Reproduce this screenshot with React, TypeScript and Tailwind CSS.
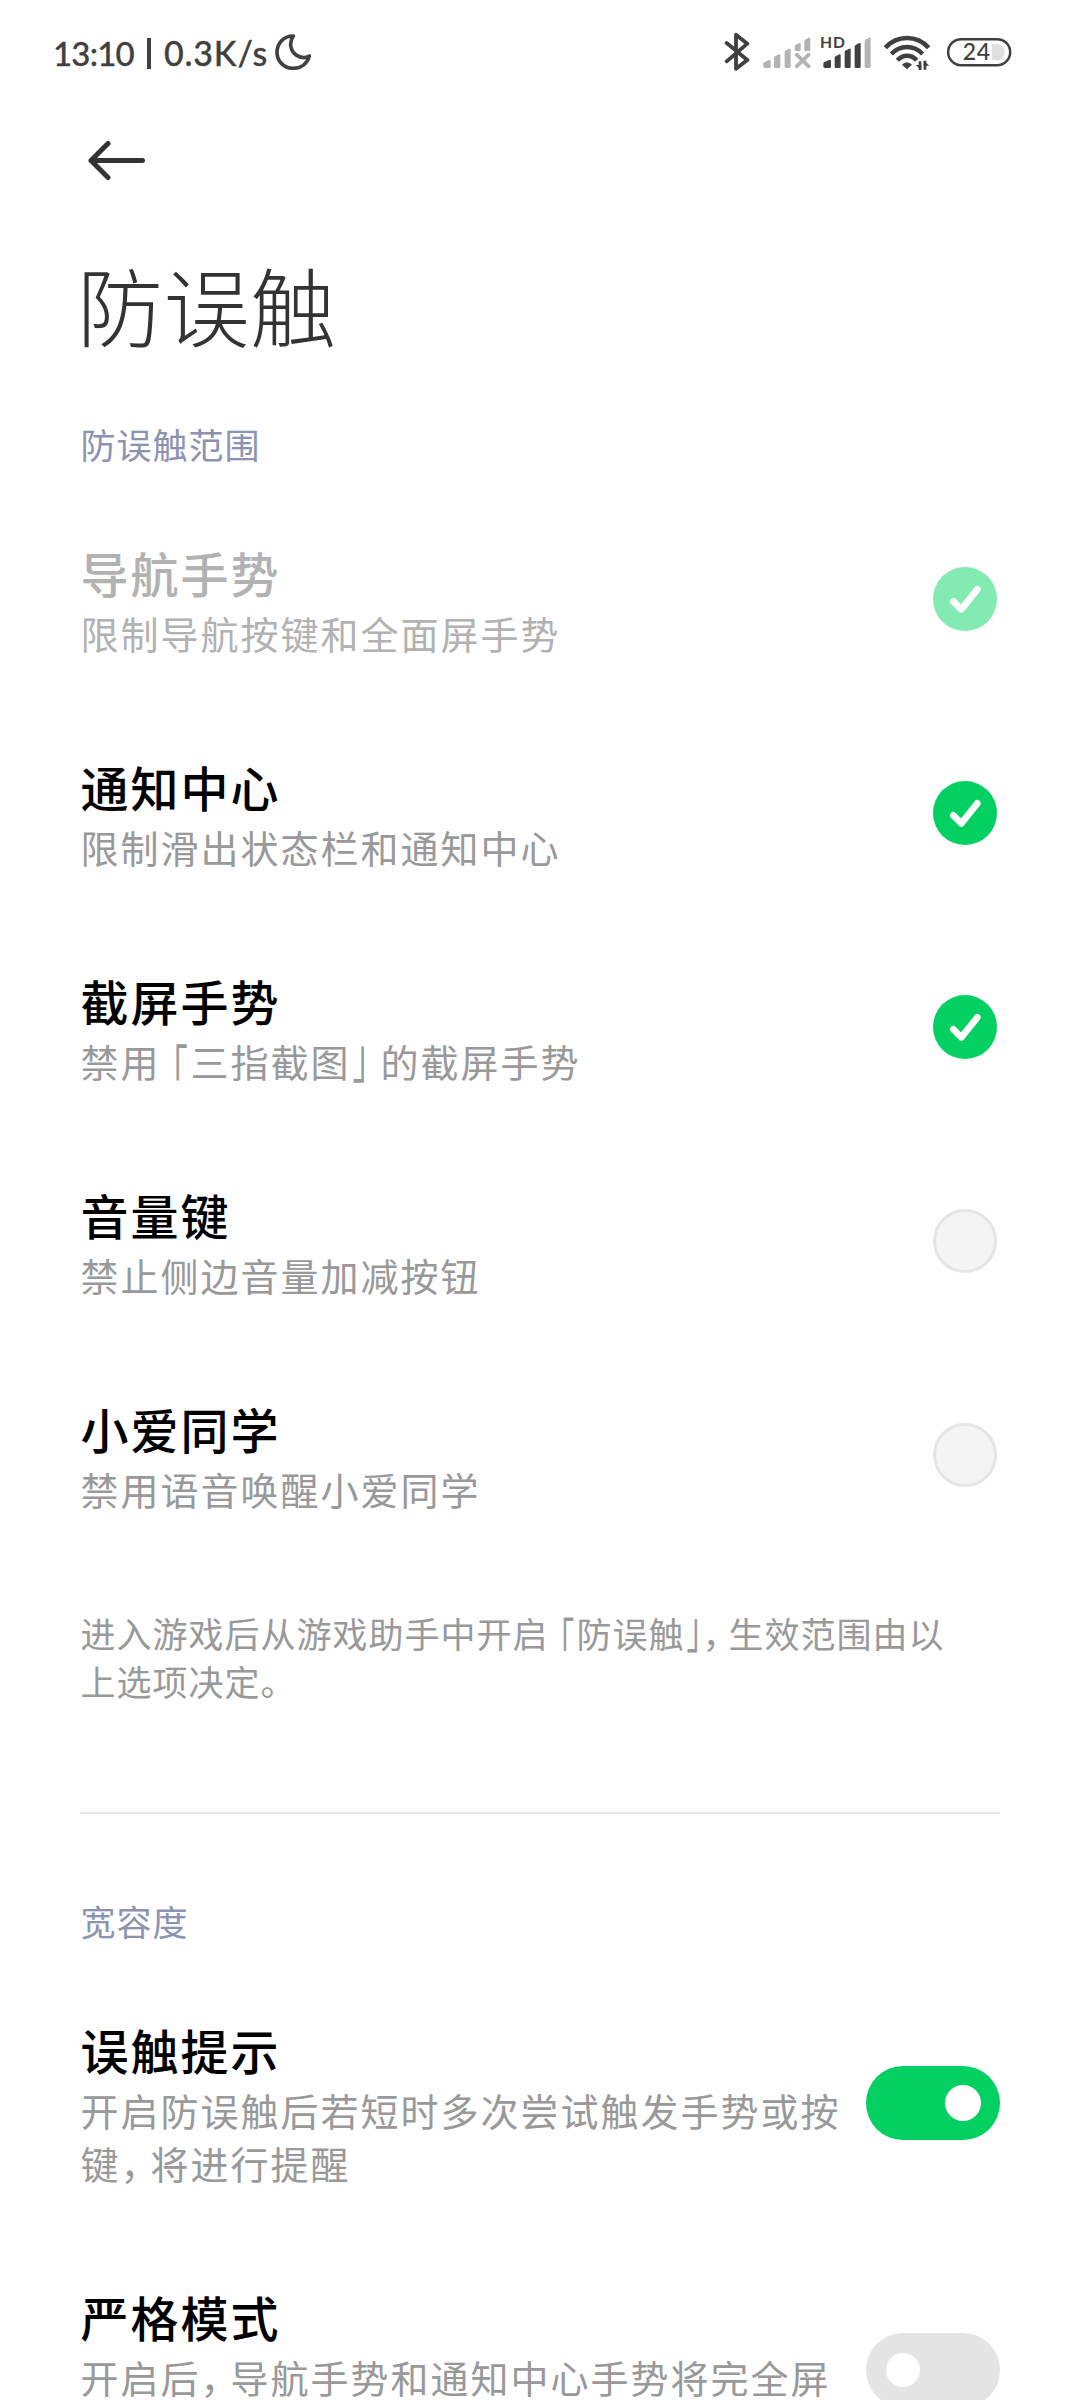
import type { ReactNode } from "react";

type RangeItem = {
  title: string;
  summary: ReactNode;
  checked: boolean;
  disabled?: boolean;
};

function Open({ className }: { className: string }) {
  return (
    <span className={`inline-block text-right [font-feature-settings:'halt'] ${className}`}>
      <span className="inline-block origin-[50%_21%] scale-x-85 scale-y-[1.45]">「</span>
    </span>
  );
}

function Close({ className }: { className: string }) {
  return (
    <span className={`inline-block [font-feature-settings:'halt'] ${className}`}>
      <span className="inline-block origin-[50%_82%] scale-x-85 scale-y-[1.45]">」</span>
    </span>
  );
}

function Comma({ className }: { className: string }) {
  return <span className={`inline-block [font-feature-settings:'halt'] ${className}`}>，</span>;
}

const rangeItems: RangeItem[] = [
  { title: "导航手势", summary: "限制导航按键和全面屏手势", checked: true, disabled: true },
  { title: "通知中心", summary: "限制滑出状态栏和通知中心", checked: true },
  {
    title: "截屏手势",
    summary: (
      <>
        禁用
        <Open className="w-[30px]" />
        三指截图
        <Close className="w-[30px]" />
        的截屏手势
      </>
    ),
    checked: true,
  },
  { title: "音量键", summary: "禁止侧边音量加减按钮", checked: false },
  { title: "小爱同学", summary: "禁用语音唤醒小爱同学", checked: false },
];

function StatusBar() {
  return (
    <div className="flex h-[106px] items-start justify-between pt-[18px] pr-[68px] pl-[53px] text-[#404040]">
      <div className="flex h-[70px] items-center font-['Lato',sans-serif] text-[34px] leading-[70px] font-medium whitespace-pre [-webkit-text-stroke:0.3px_#404040]">
        <span className="w-[90px] text-[33px] tracking-[-0.8px]">13:10</span>
        <span className="mr-[13px] ml-[4px] h-[31px] w-[4px] bg-[#404040]" />
        <span className="w-[111px] tracking-[0.8px]">0.3K/s</span>
        <svg className="mb-[3px] h-[36px] w-[36px]" viewBox="0 0 108 108" fill="none" stroke="currentColor" strokeWidth="11" strokeLinejoin="round">
          <path d="M55 6 C24 6 6 29 6 55 C6 84 28 103 55 103 C80 103 97 88 103 66 C92 73 78 72 65 64 C46 52 41 25 55 6 Z" />
        </svg>
      </div>

      <div className="flex h-[70px] pt-[2px]">
        <svg className="h-[70px] w-[38px]" viewBox="75 0 114 210" fill="none" stroke="currentColor" strokeWidth="11.5" strokeLinecap="round" strokeLinejoin="round">
          <path d="M83 69 L145 120 L111 146 V44 L145 71 L83 124" />
        </svg>
        <svg className="h-[70px] w-[56px]" viewBox="189 0 168 210" fill="#b3b3b3">
          <path d="M193 139 V131 Q193 127 197 126 L210 120 Q215 119 215 123 V140 Q215 144 211 144 H198 Q193 144 193 139Z" />
          <path d="M225 140 V114 Q225 110 229 108 L240 103 Q244 102 244 106 V140 Q244 144 240 144 H229 Q225 144 225 140Z" />
          <path d="M257 140 V97 Q257 93 261 91 L271 86 Q275 85 275 89 V140 Q275 144 271 144 H261 Q257 144 257 140Z" />
          <path d="M287 89 V80 Q287 76 291 74 L301 69 Q305 68 305 72 V89 Q305 93 301 93 H291 Q287 93 287 89Z" />
          <path d="M316 89 V65 Q316 60 320 58 L330 53 Q334 52 334 56 V89 Q334 93 330 93 H320 Q316 93 316 89Z" />
          <path d="M293 104 L329 139 M329 104 L293 139" stroke="#b3b3b3" strokeWidth="11" strokeLinecap="round" />
        </svg>
        <svg className="h-[70px] w-[65px]" viewBox="357 0 195 210" fill="currentColor">
          <text x="363" y="83" fontFamily="Lato, sans-serif" fontWeight="700" fontSize="47" textLength="75">
            HD
          </text>
          <path d="M373 139 V131 Q373 127 377 126 L390 120 Q396 119 396 123 V140 Q396 144 392 144 H378 Q373 144 373 139Z" />
          <path d="M407 140 V114 Q407 110 411 108 L421 103 Q425 102 425 106 V140 Q425 144 421 144 H411 Q407 144 407 140Z" />
          <path d="M437 140 V97 Q437 93 441 91 L451 86 Q455 85 455 89 V140 Q455 144 451 144 H441 Q437 144 437 140Z" />
          <path d="M467 140 V80 Q467 76 471 74 L481 69 Q485 68 485 72 V140 Q485 144 481 144 H471 Q467 144 467 140Z" />
          <path d="M497 140 V65 Q497 60 501 58 L511 53 Q515 52 515 56 V140 Q515 144 511 144 H501 Q497 144 497 140Z" fill="#b3b3b3" />
        </svg>
        <svg className="h-[70px] w-[63px]" viewBox="552 0 189 210" fill="none" stroke="currentColor" strokeWidth="13.5">
          <path d="M559 83 Q586 54 624 54 Q662 54 689 83" />
          <path d="M577 102 Q597 81 624 81 Q651 81 671 102" />
          <path d="M595 121 Q608 107 624 107 Q641 107 653 121" />
          <path d="M609 134 Q624 119 639 134 L624 148Z" fill="currentColor" stroke="none" />
          <path d="M663 124 V150 M678 122 V149" strokeWidth="8" />
          <path d="M667 150 L650 135 H667Z M674 122 L691 137 H674Z" fill="currentColor" stroke="none" />
        </svg>
        <svg className="h-[70px] w-[66px]" viewBox="741 0 198 210" fill="none">
          <rect x="747.500" y="57.500" width="186" height="78" rx="39" stroke="currentColor" strokeWidth="7.500" />
          <path d="M879 72 H893 C909 72 917 84 917 96 C917 109 909 121 893 121 H879Z" fill="#e0e0e0" />
          <text x="791" y="121" fill="currentColor" fontFamily="Lato, sans-serif" fontWeight="500" fontSize="69" textLength="82">
            24
          </text>
        </svg>
      </div>
    </div>
  );
}

function SectionTitle({ children }: { children: ReactNode }) {
  return <h2 className="text-[35px] leading-[48px] tracking-[1px] text-[#8c93b0]">{children}</h2>;
}

function RowText({ title, summary }: { title: string; summary: ReactNode }) {
  return (
    <div className="pt-[49px] whitespace-nowrap">
      <div className="text-[48px] leading-[60px] font-medium tracking-[2px] text-black">{title}</div>
      <div className="mt-[4px] text-[38px] leading-[53px] tracking-[2px] text-[#999999]">{summary}</div>
    </div>
  );
}

function Check({ checked, disabled }: { checked: boolean; disabled?: boolean }) {
  if (!checked) {
    return <span className="mr-[3px] size-[64px] rounded-full border-3 border-[#e5e5e5] bg-[#f4f4f4]" />;
  }
  return (
    <span
      className={`mr-[3px] flex size-[64px] items-center justify-center rounded-full ${
        disabled ? "bg-[#82eab2]" : "bg-[#02d162]"
      }`}
    >
      <svg className="size-[64px]" viewBox="0 0 192 192" fill="none" stroke="white" strokeWidth="20" strokeLinecap="round" strokeLinejoin="round">
        <path d="M61 103 L85 127 L133 67" />
      </svg>
    </span>
  );
}

function Switch({ on }: { on: boolean }) {
  return (
    <span
      className={`flex h-[74px] w-[134px] shrink-0 items-center rounded-full ${
        on ? "justify-end bg-[#02d162] pr-[19px]" : "bg-[#e5e5e5] pl-[20px]"
      }`}
    >
      <span className={`rounded-full bg-white ${on ? "size-[36px]" : "size-[34px]"}`} />
    </span>
  );
}

function App() {
  return (
    <main className="h-[2400px] w-[1080px] overflow-hidden bg-[#fefefe] font-['Noto_Sans_CJK_SC',sans-serif]">
      <StatusBar />
      <header className="px-[80px]">
        <svg className="mt-[34px] ml-[8px] h-[41px] w-[58px]" viewBox="0 0 58 41" fill="none" stroke="#333333" strokeWidth="5" strokeLinecap="round" strokeLinejoin="round">
          <path d="M54.500 20.500H3M20 3.500L3 20.500L20 37.500" />
        </svg>
        <h1 className="mt-[73px] ml-[-3px] text-[86px] leading-[100px] font-light tracking-[0.5px] text-[#333333]">防误触</h1>
      </header>

      <section className="pt-[66px] pr-[80px] pl-[80.5px]">
        <SectionTitle>防误触范围</SectionTitle>
        <div className="mt-[25px]">
          {rangeItems.map((item) => (
            <div key={item.title} className="flex h-[214px] justify-between">
              <div className={item.disabled ? "[&_div]:text-[#b2b2b2]" : ""}>
                <RowText title={item.title} summary={item.summary} />
              </div>
              <div className="flex items-center pb-[2px]">
                <Check checked={item.checked} disabled={item.disabled} />
              </div>
            </div>
          ))}
        </div>
        <p className="mt-[46px] text-[35px] leading-[48px] tracking-[1px] whitespace-nowrap text-[#999999]">
          进入游戏后从游戏助手中开启
          <Open className="w-[28px]" />
          防误触
          <Close className="w-[18px]" />
          <Comma className="w-[26px]" />
          生效范围由以
          <br />
          上选项决定。
        </p>
      </section>

      <hr className="mx-[80px] mt-[107px] border-t-2 border-[#e5e5e5]" />

      <section className="pt-[83px] pr-[80px] pl-[80.5px]">
        <SectionTitle>宽容度</SectionTitle>
        <div className="mt-[25px]">
          <div className="flex h-[267px] justify-between">
            <RowText
              title="误触提示"
              summary={
                <>
                  开启防误触后若短时多次尝试触发手势或按
                  <br />
                  键
                  <Comma className="w-[30px]" />
                  将进行提醒
                </>
              }
            />
            <div className="flex items-center pb-[2px]">
              <Switch on />
            </div>
          </div>
          <div className="flex h-[267px] justify-between">
            <RowText
              title="严格模式"
              summary={
                <>
                  开启后
                  <Comma className="w-[30px]" />
                  导航手势和通知中心手势将完全屏
                </>
              }
            />
            <div className="flex items-center pb-[2px]">
              <Switch on={false} />
            </div>
          </div>
        </div>
      </section>
    </main>
  );
}

export default App;
